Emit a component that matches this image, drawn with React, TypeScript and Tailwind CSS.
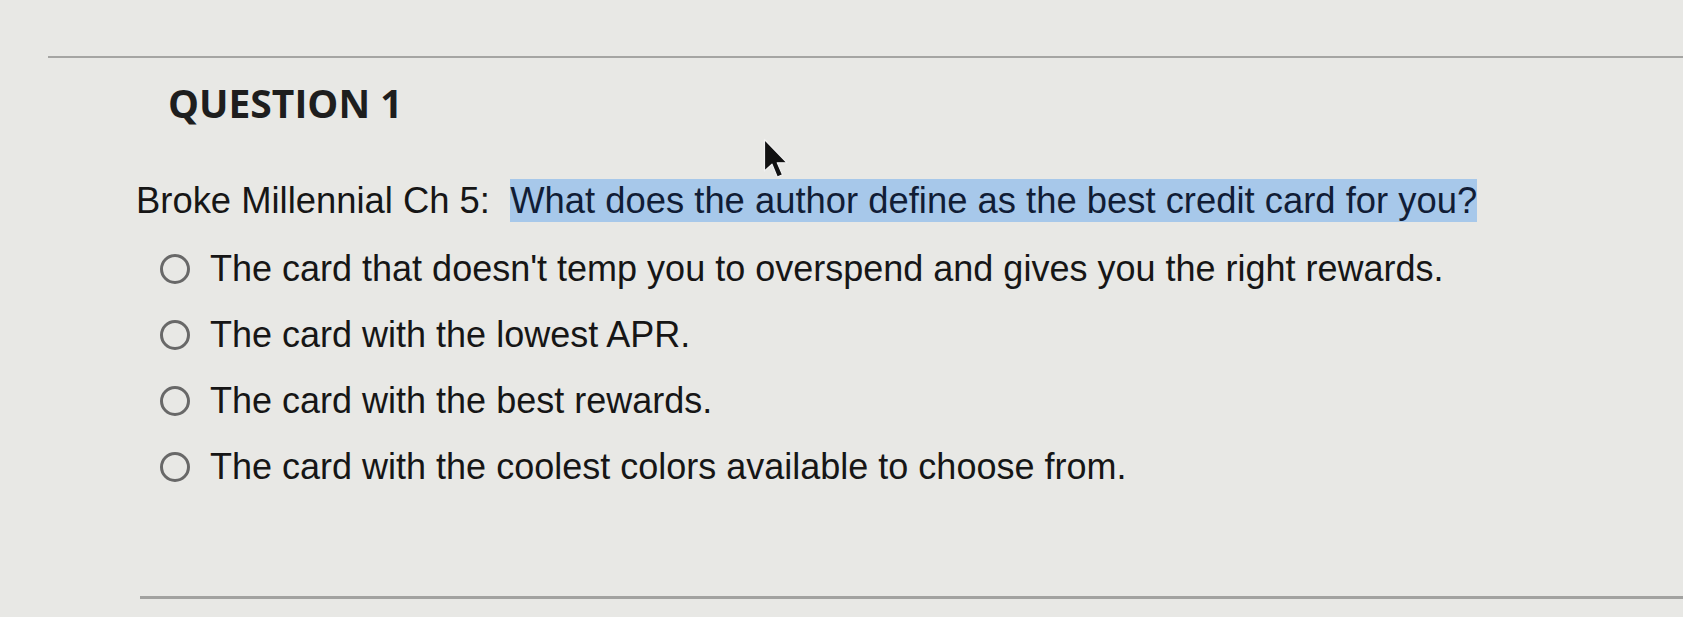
const options = [
  "The card that doesn't temp you to overspend and gives you the right rewards.",
  "The card with the lowest APR.",
  "The card with the best rewards.",
  "The card with the coolest colors available to choose from.",
];

function Cursor() {
  return (
    <svg width="30" height="42" viewBox="0 0 20 28" className="absolute left-[763px] top-[138px]">
      <path d="M1 1 L1 22 L6 17.5 L9.5 26 L13 24.5 L9.5 16.5 L16 16.5 Z" fill="#111" stroke="#f2f2f2" strokeWidth="0.8" strokeLinejoin="round" />
    </svg>
  );
}

export default function App() {
  return (
    <div className="relative h-[617px] w-full overflow-hidden bg-[#e8e8e5] text-[#161616]">
      <div className="pt-[56px] pl-[48px]">
        <div className="h-[2px] bg-[#a5a5a3]" />
      </div>

      <h1 className="ml-[168px] mt-[25px] text-[39px] leading-[40px] font-bold font-['Open_Sans',sans-serif] text-[#1e1e1e]">
        QUESTION 1
      </h1>

      <p className="ml-[136px] mt-[60px] whitespace-pre text-[36.4px] leading-[36px] font-['Liberation_Sans',Arial,sans-serif]">
        Broke Millennial Ch 5:{"  "}
        <span className="bg-[#a7c8ea] py-[1px] text-[#111d36]">
          What does the author define as the best credit card for you?
        </span>
      </p>

      <ul className="ml-[160px] mt-[17px] flex flex-col">
        {options.map((o) => (
          <li key={o} className="flex h-[66px] items-center gap-[20px]">
            <span className="h-[30px] w-[30px] shrink-0 rounded-full border-[3px] border-[#686868]" />
            <span className="text-[36px] leading-[36px] font-['Liberation_Sans',Arial,sans-serif]">{o}</span>
          </li>
        ))}
      </ul>

      <div className="ml-[140px] mt-[96px] h-[3px] bg-[#a2a2a0]" />

      <Cursor />
    </div>
  );
}
